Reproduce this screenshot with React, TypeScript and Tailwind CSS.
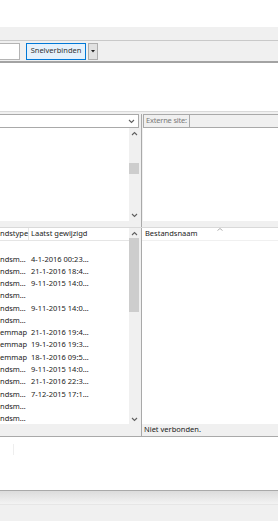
import React from 'react';

const rows: [string, string][] = [
    ['', ''],
    ['ndsm…', '4-1-2016 00:23…'],
    ['ndsm…', '21-1-2016 18:4…'],
    ['ndsm…', '9-11-2015 14:0…'],
    ['ndsm…', ''],
    ['ndsm…', '9-11-2015 14:0…'],
    ['ndsm…', ''],
    ['emmap', '21-1-2016 19:4…'],
    ['emmap', '19-1-2016 19:3…'],
    ['emmap', '18-1-2016 09:5…'],
    ['ndsm…', '9-11-2015 14:0…'],
    ['ndsm…', '21-1-2016 22:3…'],
    ['ndsm…', '7-12-2015 17:1…'],
    ['ndsm…', ''],
    ['ndsm…', ''],
];

const Chevron = ({ up }: { up?: boolean }) => (
    <svg width="7" height="5" viewBox="0 0 7 5" className="block">
        <path d={up ? 'M1 4 L3.5 1.5 L6 4' : 'M1 1 L3.5 3.5 L6 1'} fill="none" stroke="#606060" strokeWidth="1.1" />
    </svg>
);

const Scrollbar = ({ thumbTop, thumbHeight }: { thumbTop: number; thumbHeight: number }) => (
    <div className="w-[10px] h-full bg-[#f0f0f0] flex flex-col items-center justify-between py-[3px] relative shrink-0">
        <Chevron up />
        <div className="absolute left-0 w-[10px] bg-[#cdcdcd]" style={{ top: thumbTop, height: thumbHeight }} />
        <Chevron />
    </div>
);

export default function App() {
    return (
        <div className="w-[278px] h-[521px] bg-white flex flex-col overflow-hidden text-[7.5px] text-[#1a1a1a] whitespace-nowrap" style={{ fontFamily: '"Noto Sans", "Open Sans", sans-serif' }}>
            {/* title area */}
            <div className="h-[27px] bg-white shrink-0" />

            {/* toolbar */}
            <div className="h-[14px] bg-[#f0f0f0] border-b border-[#c9c9c9] shrink-0" />

            {/* quickconnect bar */}
            <div className="h-[22px] bg-[#f0f0f0] border-b-2 border-[#a3a3a3] flex items-center shrink-0">
                <div className="w-[20px] h-[17px] bg-white border border-[#b4b4b4] border-l-0" />
                <button className="ml-[6px] w-[60px] h-[17px] bg-[#e5f1fb] border border-[#0078d7] text-[#333] text-[7.5px] leading-none">
                    Snelverbinden
                </button>
                <div className="ml-[2px] w-[10px] h-[17px] bg-[#e1e1e1] border border-[#adadad] flex items-center justify-center">
                    <svg width="4" height="3" viewBox="0 0 4 3"><path d="M0 0 H4 L2 2.5 Z" fill="#222" /></svg>
                </div>
            </div>

            {/* message log */}
            <div className="h-[48px] bg-white shrink-0" />

            {/* site panes */}
            <div className="h-[116px] bg-[#f0f0f0] border-t border-[#d9d9d9] pt-[2px] flex shrink-0">
                <div className="w-[139px] flex flex-col">
                    <div className="h-[14px] bg-white border-b border-t border-[#a9a9a9] border-r flex items-center justify-end pr-[3px]">
                        <Chevron />
                    </div>
                    <div className="h-[93px] bg-white flex justify-end">
                        <Scrollbar thumbTop={35} thumbHeight={11} />
                    </div>
                </div>
                <div className="w-[2px]" />
                <div className="flex-1 flex flex-col border-l border-[#a9a9a9] pl-px">
                    <div className="h-[14px] flex">
                        <div className="h-[14px] border border-[#a9a9a9] text-[#7a7a7a] flex items-center px-[2px] leading-none tracking-[-0.2px]">
                            Externe site:
                        </div>
                        <div className="flex-1 h-[14px] bg-[#f0f0f0] border-b border-t border-[#a9a9a9]" />
                    </div>
                    <div className="h-[93px] bg-white" />
                </div>
            </div>

            {/* file lists */}
            <div className="h-[197px] bg-[#f0f0f0] border-t border-[#d9d9d9] flex shrink-0">
                <div className="w-[139px] flex flex-col">
                    <div className="h-[197px] bg-white flex">
                        <div className="flex-1 flex flex-col">
                            <div className="h-[13px] flex items-center border-b border-[#e5e5e5]">
                                <div className="w-[29px] border-r border-[#e5e5e5] h-full flex items-center">ndstype</div>
                                <div className="pl-[2px] h-full flex items-center">Laatst gewijzigd</div>
                            </div>
                            {rows.map(([a, b], i) => (
                                <div key={i} className="h-[12.3px] flex items-center leading-none">
                                    <div className="w-[29px]">{a}</div>
                                    <div className="pl-[2px]">{b}</div>
                                </div>
                            ))}
                        </div>
                        <Scrollbar thumbTop={10} thumbHeight={74} />
                    </div>
                </div>
                <div className="w-[2px]" />
                <div className="flex-1 flex flex-col border-l border-[#a9a9a9]">
                    <div className="h-[197px] bg-white relative">
                        <div className="h-[13px] flex items-center pl-[3px] border-b border-[#f0f0f0]">Bestandsnaam</div>
                        <svg width="6" height="3" viewBox="0 0 6 3" className="absolute left-[75px] top-0">
                            <path d="M0.5 2.5 L3 0.5 L5.5 2.5" fill="none" stroke="#9a9a9a" strokeWidth="0.8" />
                        </svg>
                    </div>
                </div>
            </div>

            {/* status line */}
            <div className="h-[12px] bg-[#f0f0f0] flex shrink-0">
                <div className="w-[141px]" />
                <div className="flex-1 border-l border-[#a9a9a9] flex items-center pl-[2px] text-[#1a1a1a] leading-none">
                    Niet verbonden.
                </div>
            </div>

            {/* queue */}
            <div className="h-[55px] bg-white border-t border-b border-[#a9a9a9] shrink-0 relative">
                <div className="absolute left-[13px] top-[7px] w-px h-[11px] bg-[#eeeeee]" />
            </div>

            {/* queue tabs */}
            <div className="h-[14px] bg-gradient-to-b from-[#dcdcdc] to-[#f3f3f3] border-b border-[#e6e6e6] shrink-0" />

            {/* status bar */}
            <div className="flex-1 bg-[#f0f0f0]" />
        </div>
    );
}
